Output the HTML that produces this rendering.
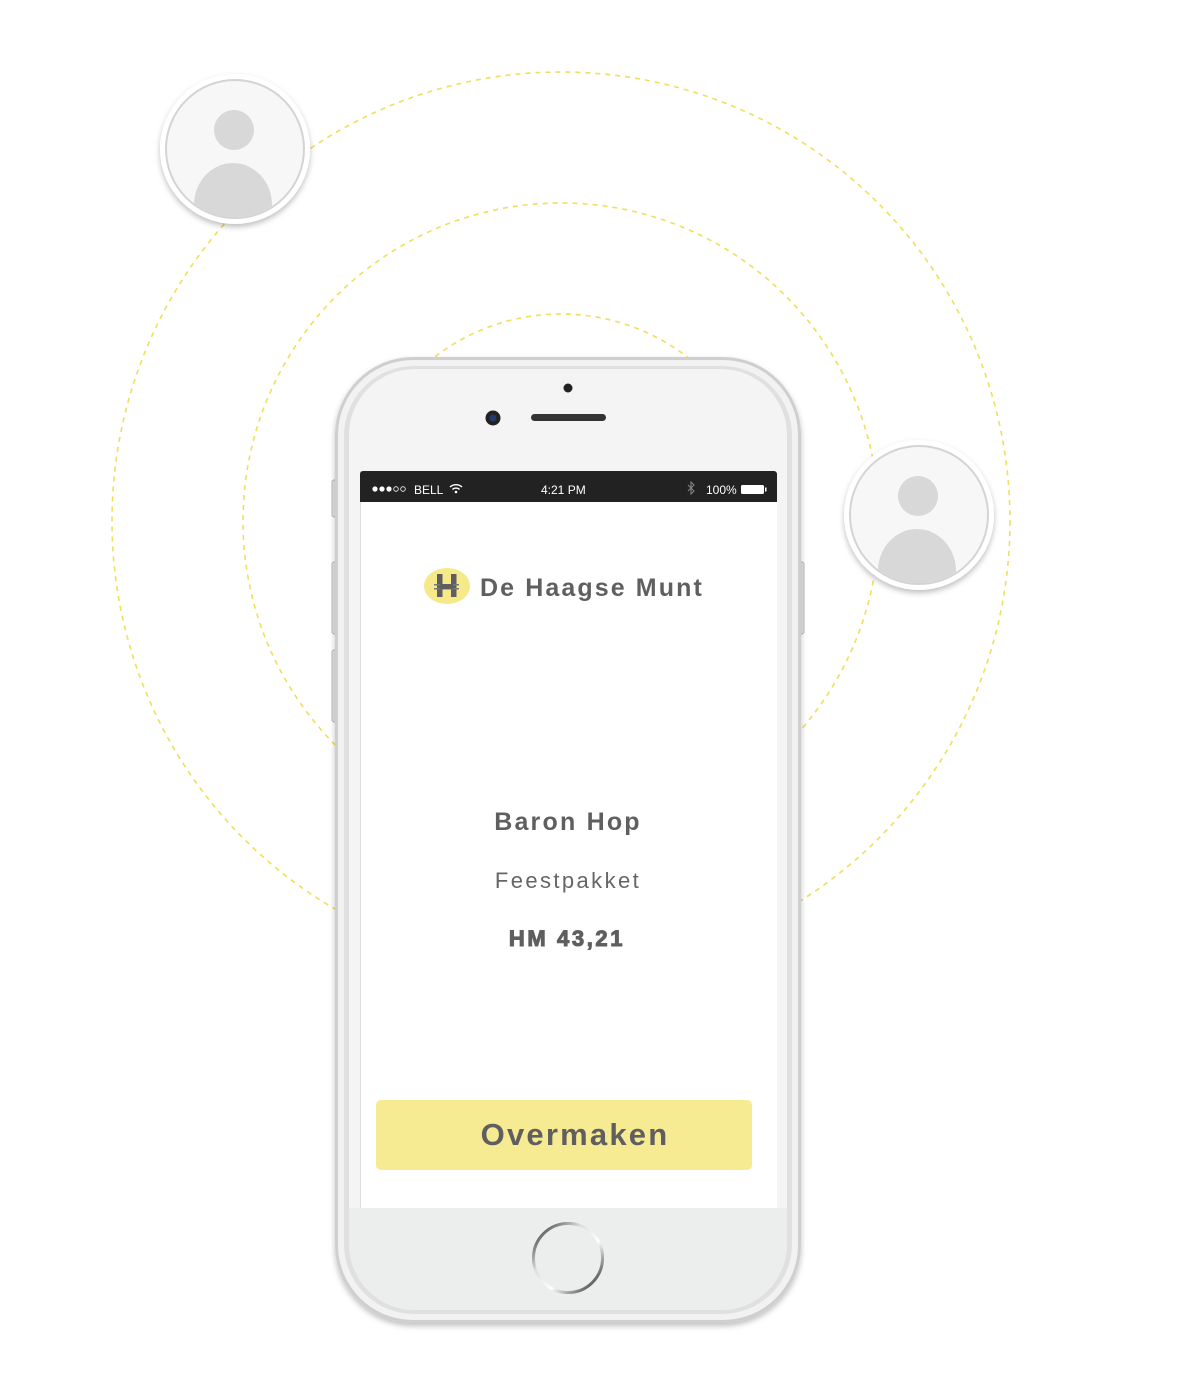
<!DOCTYPE html>
<html><head><meta charset="utf-8"><style>
html,body{margin:0;padding:0;background:#fff;width:1200px;height:1400px;overflow:hidden}
svg{display:block}
text{font-family:"Liberation Sans",sans-serif}
</style></head><body>
<svg width="1200" height="1400" viewBox="0 0 1200 1400" xmlns="http://www.w3.org/2000/svg">
<defs>
<linearGradient id="ring" x1="0" y1="0" x2="1" y2="1">
<stop offset="0" stop-color="#222"/><stop offset="0.35" stop-color="#ddd"/><stop offset="0.6" stop-color="#fff"/><stop offset="1" stop-color="#111"/></linearGradient>
<filter id="sh" x="-20%" y="-20%" width="140%" height="140%"><feDropShadow dx="0" dy="3" stdDeviation="3" flood-color="#000" flood-opacity="0.25"/></filter>
<clipPath id="c1"><circle cx="235" cy="149" r="68"/></clipPath>
<clipPath id="c2"><circle cx="919" cy="515" r="68"/></clipPath>
</defs>
<g fill="none" stroke="#f0df5a" stroke-width="1.6" stroke-dasharray="5 5">
<circle cx="561" cy="521" r="449"/>
<circle cx="561" cy="521" r="318"/>
<circle cx="561" cy="521" r="207"/>
</g>
<g fill="#e4e4e4" stroke="#bbb" stroke-width="1">
<rect x="332" y="480" width="5" height="37" rx="2"/>
<rect x="332" y="562" width="5" height="72" rx="2"/>
<rect x="332" y="650" width="5" height="72" rx="2"/>
<rect x="799" y="562" width="5" height="72" rx="2"/>
</g>
<rect x="335" y="357" width="466" height="966" rx="78" fill="#cfcfcf" filter="url(#sh)"/>
<rect x="338" y="360" width="460" height="960" rx="75" fill="#f2f2f2"/>
<rect x="344" y="366" width="448" height="948" rx="70" fill="#e0e0e0"/>
<rect x="349" y="369" width="438" height="941" rx="66" fill="#f4f4f4"/>
<path d="M349 1208 H787 V1244 a66 66 0 0 1 -66 66 H415 a66 66 0 0 1 -66 -66 Z" fill="#eceeed"/>
<circle cx="568" cy="388" r="4.5" fill="#222"/>
<circle cx="493" cy="418" r="7.5" fill="#222"/>
<circle cx="493" cy="418" r="3.5" fill="#223a70"/>
<rect x="531" y="414" width="75" height="7" rx="3.5" fill="#333"/>
<rect x="360" y="471" width="417" height="737" fill="#fff"/>
<line x1="360.5" y1="471" x2="360.5" y2="1208" stroke="#ddd"/>
<path d="M360 502 V474 a3 3 0 0 1 3 -3 H774 a3 3 0 0 1 3 3 V502 Z" fill="#222"/>
<g fill="#fff">
<circle cx="375" cy="489" r="2.6"/><circle cx="382" cy="489" r="2.6"/><circle cx="389" cy="489" r="2.6"/>
<circle cx="396" cy="489" r="2.3" fill="none" stroke="#fff" stroke-width="0.8"/><circle cx="403" cy="489" r="2.3" fill="none" stroke="#fff" stroke-width="0.8"/>
<text x="414" y="494" font-size="12" fill="#fff">BELL</text>
<text x="541" y="494" font-size="12" fill="#fff">4:21 PM</text>
<text x="706" y="494" font-size="12" fill="#fff">100%</text>
<rect x="741" y="485" width="23" height="9" rx="1.5"/>
<rect x="765" y="487.5" width="1.5" height="4"/>
</g>
<g fill="none" stroke="#fff" stroke-width="1.4">
<path d="M450 487 a9 9 0 0 1 12 0"/><path d="M452.5 489.5 a5 5 0 0 1 7 0"/>
</g>
<circle cx="456" cy="492" r="1.3" fill="#fff"/>
<path d="M688 485 l6 6 l-3 3 v-12 l3 3 l-6 6" fill="none" stroke="#888" stroke-width="1"/>
<ellipse cx="447" cy="586" rx="23" ry="18" fill="#f5e98a"/>
<rect x="437" y="574" width="5.5" height="23" fill="#5f5f5f"/>
<rect x="451" y="574" width="5.5" height="23" fill="#5f5f5f"/>
<rect x="434" y="584" width="25" height="1.5" fill="#777"/>
<rect x="434" y="588" width="25" height="1.5" fill="#777"/>
<rect x="440" y="584" width="13" height="5" fill="#5f5f5f"/>
<text x="480" y="596" font-size="25" font-weight="bold" fill="#5f5f5f" letter-spacing="2.1">De Haagse Munt</text>
<text x="568" y="830" font-size="25" font-weight="bold" fill="#5f5f5f" letter-spacing="2.2" text-anchor="middle">Baron Hop</text>
<text x="568" y="888" font-size="22" fill="#666" letter-spacing="2.4" text-anchor="middle">Feestpakket</text>
<text x="567" y="946" font-size="22" font-weight="900" fill="#5f5f5f" letter-spacing="2.6" text-anchor="middle" stroke="#5f5f5f" stroke-width="1">HM 43,21</text>
<rect x="376" y="1100" width="376" height="70" rx="5" fill="#f6ea93"/>
<text x="575" y="1145" font-size="31" font-weight="bold" fill="#5f5f5f" letter-spacing="2.2" text-anchor="middle">Overmaken</text>
<circle cx="568" cy="1258" r="34.5" fill="#eceeed" stroke="url(#ring)" stroke-width="3"/>
<g filter="url(#sh)"><circle cx="235" cy="149" r="75" fill="#fff"/></g>
<circle cx="235" cy="149" r="69" fill="#f7f7f7" stroke="#d4d4d4" stroke-width="2"/>
<g clip-path="url(#c1)" fill="#d8d8d8"><circle cx="234" cy="130" r="20"/><ellipse cx="233" cy="205" rx="39" ry="42"/></g>
<g filter="url(#sh)"><circle cx="919" cy="515" r="75" fill="#fff"/></g>
<circle cx="919" cy="515" r="69" fill="#f7f7f7" stroke="#d4d4d4" stroke-width="2"/>
<g clip-path="url(#c2)" fill="#d8d8d8"><circle cx="918" cy="496" r="20"/><ellipse cx="917" cy="571" rx="39" ry="42"/></g>
</svg>
</body></html>
